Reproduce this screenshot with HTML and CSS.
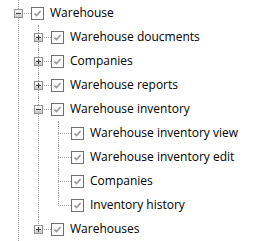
FILE: index.html
```html
<!DOCTYPE html>
<html>
<head>
	<title>Tree</title>
	<meta charset="utf-8" />
	<link rel="stylesheet" href="styles.css">
</head>
<body>
	<ul class="tree">
		<li class="node">
			<div class="row"><span class="toggle open"></span><span class="check"><svg viewBox="0 0 11 11"><path d="M2.5 5.5 L4.5 7.5 L8.5 3"/></svg></span><span class="label">Warehouse</span></div>
			<ul>
				<li class="node">
					<div class="row"><span class="toggle"></span><span class="check"><svg viewBox="0 0 11 11"><path d="M2.5 5.5 L4.5 7.5 L8.5 3"/></svg></span><span class="label">Warehouse doucments</span></div>
				</li>
				<li class="node">
					<div class="row"><span class="toggle"></span><span class="check"><svg viewBox="0 0 11 11"><path d="M2.5 5.5 L4.5 7.5 L8.5 3"/></svg></span><span class="label">Companies</span></div>
				</li>
				<li class="node">
					<div class="row"><span class="toggle"></span><span class="check"><svg viewBox="0 0 11 11"><path d="M2.5 5.5 L4.5 7.5 L8.5 3"/></svg></span><span class="label">Warehouse reports</span></div>
				</li>
				<li class="node">
					<div class="row"><span class="toggle open"></span><span class="check"><svg viewBox="0 0 11 11"><path d="M2.5 5.5 L4.5 7.5 L8.5 3"/></svg></span><span class="label">Warehouse inventory</span></div>
					<ul>
						<li class="node">
							<div class="row"><span class="spacer"></span><span class="check"><svg viewBox="0 0 11 11"><path d="M2.5 5.5 L4.5 7.5 L8.5 3"/></svg></span><span class="label">Warehouse inventory view</span></div>
						</li>
						<li class="node">
							<div class="row"><span class="spacer"></span><span class="check"><svg viewBox="0 0 11 11"><path d="M2.5 5.5 L4.5 7.5 L8.5 3"/></svg></span><span class="label">Warehouse inventory edit</span></div>
						</li>
						<li class="node">
							<div class="row"><span class="spacer"></span><span class="check"><svg viewBox="0 0 11 11"><path d="M2.5 5.5 L4.5 7.5 L8.5 3"/></svg></span><span class="label">Companies</span></div>
						</li>
						<li class="node last">
							<div class="row"><span class="spacer"></span><span class="check"><svg viewBox="0 0 11 11"><path d="M2.5 5.5 L4.5 7.5 L8.5 3"/></svg></span><span class="label">Inventory history</span></div>
						</li>
					</ul>
				</li>
				<li class="node last">
					<div class="row"><span class="toggle"></span><span class="check"><svg viewBox="0 0 11 11"><path d="M2.5 5.5 L4.5 7.5 L8.5 3"/></svg></span><span class="label">Warehouses</span></div>
				</li>
			</ul>
		</li>
	</ul>
</body>
</html>
```

FILE: styles.css
```css
/* general styles */
body { margin: 0; padding-top: 1px; background: #fff; font-family: "Open Sans", Arial, sans-serif; font-size: 12px; color: #000; overflow: hidden; }
* { box-sizing: border-box; }
ul { list-style: none; margin: 0; padding: 0; }
.tree ul { padding-left: 20px; }

/* tree nodes and connector lines */
.node { position: relative; }
.node::before { content: ""; position: absolute; left: 18px; top: -1px; bottom: 0; border-left: 1px dotted #a0a0a0; }
.node.last::before { bottom: auto; height: 13px; }
.tree ul .node::before { top: 0; }
.node::after { content: ""; position: absolute; left: 18px; top: 12px; width: 13px; border-top: 1px dotted #a0a0a0; }

.row { position: relative; z-index: 1; display: flex; align-items: center; height: 24px; }
.toggle, .spacer { width: 9px; height: 9px; margin: 0 8px 0 14px; flex: none; }
.toggle { position: relative; border: 1px solid #959595; background: linear-gradient(#ffffff, #dcdcdc 60%, #c6c6c6); }
.toggle::before { content: ""; position: absolute; left: 1px; top: 3px; width: 5px; height: 1px; background: #3a3a3a; }
.toggle::after { content: ""; position: absolute; left: 3px; top: 1px; width: 1px; height: 5px; background: #3a3a3a; }
.toggle.open::after { display: none; }

.check { display: block; width: 13px; height: 13px; flex: none; border: 1px solid #707070; background: #fff; margin-right: 6px; }
.check svg { display: block; width: 11px; height: 11px; }
.check path { fill: none; stroke: #9a9a9a; stroke-width: 1.7; }
.label { white-space: nowrap; line-height: 16px; }
```
